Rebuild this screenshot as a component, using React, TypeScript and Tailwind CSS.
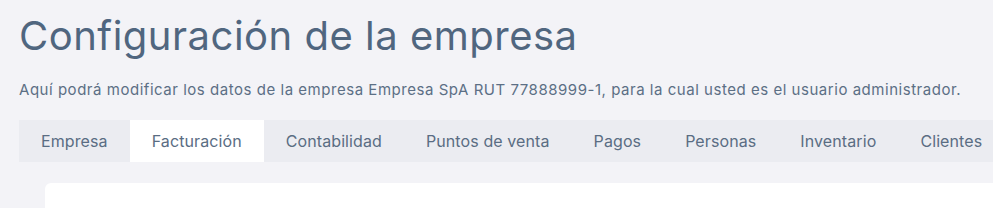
const tabs = [
  'Empresa',
  'Facturación',
  'Contabilidad',
  'Puntos de venta',
  'Pagos',
  'Personas',
  'Inventario',
  'Clientes',
];

export default function App() {
  const active = 'Facturación';

  return (
    <div className="h-[208px] w-[993px] overflow-hidden bg-[#f3f3f7] font-['Inter',sans-serif]">
      <div className="w-[1200px] pl-[19px] pt-[10px]">
        <h1 className="text-[40px] leading-[52px] font-normal tracking-[0.5px] text-[#50667f]">
          Configuración de la empresa
        </h1>
        <p className="mt-[18px] text-[15px] leading-[20px] tracking-[0.53px] text-[#5c6f85]">
          Aquí podrá modificar los datos de la empresa Empresa SpA RUT 77888999-1, para la cual usted es el usuario
          administrador.
        </p>
        <nav className="mt-[20px] flex h-[42px] w-[1100px] bg-[#ebecf1]">
          {tabs.map((tab) => (
            <button
              key={tab}
              className={
                tab === active
                  ? 'flex items-center bg-white px-[22px] text-[16px] tracking-[0.1px] text-[#5a6d83]'
                  : 'flex items-center px-[22px] text-[16px] tracking-[0.1px] text-[#5a6d83]'
              }
            >
              {tab}
            </button>
          ))}
        </nav>
        <div className="ml-[26px] mt-[21px] h-[60px] w-[1100px] rounded-md bg-white"></div>
      </div>
    </div>
  );
}
